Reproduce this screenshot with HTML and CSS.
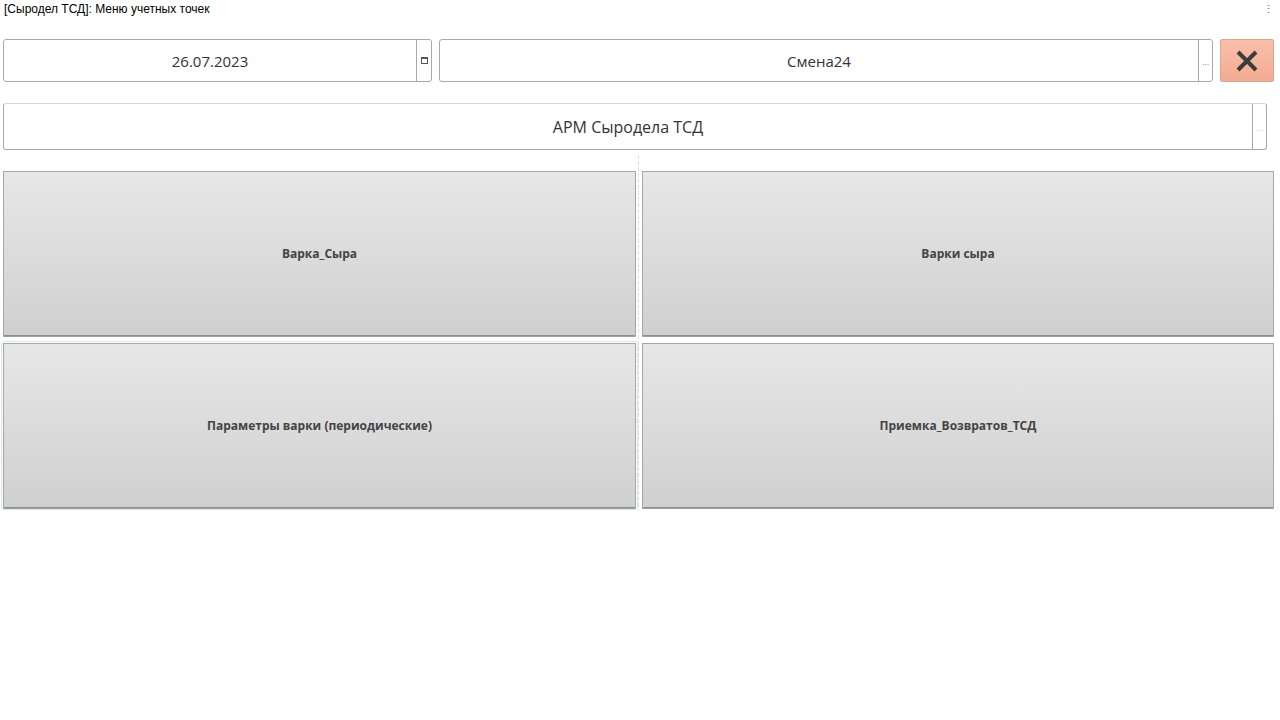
FILE: index.html
```html
<!DOCTYPE html>
<html lang="ru">
<head>
<meta charset="utf-8">
<title>Меню учетных точек</title>
<link rel="stylesheet" href="styles.css">
</head>
<body>
<div class="app">
  <div class="titlebar">
    <span class="title">[Сыродел ТСД]: Меню учетных точек</span>
    <span class="dots">⋮</span>
  </div>
  <div class="row top">
    <div class="field date">
      <div class="value">26.07.2023</div>
      <div class="btn cal">
        <svg width="7" height="7" viewBox="0 0 7 7"><rect x="0.5" y="0.5" width="6" height="6" fill="none" stroke="#555"/><rect x="0" y="0" width="7" height="2" fill="#555"/></svg>
      </div>
    </div>
    <div class="field shift">
      <div class="value">Смена24</div>
      <div class="btn ell">...</div>
    </div>
    <div class="close">
      <svg width="24" height="24" viewBox="0 0 24 24"><path d="M3 3 L21 21 M21 3 L3 21" stroke="#3c3c3c" stroke-width="4" stroke-linecap="butt"/></svg>
    </div>
  </div>
  <div class="row arm">
    <div class="field armf">
      <div class="value">АРМ Сыродела ТСД</div>
      <div class="btn ell faint">...</div>
    </div>
  </div>
  <div class="grid">
    <button class="tile">Варка_Сыра</button>
    <button class="tile">Варки сыра</button>
    <button class="tile focus">Параметры варки (периодические)</button>
    <button class="tile">Приемка_Возвратов_ТСД</button>
  </div>
</div>
</body>
</html>
```
FILE: styles.css
```css
html, body {
  margin: 0;
  padding: 0;
  background: #fff;
}
body {
  width: 1280px;
  height: 720px;
  overflow: hidden;
  font-family: "Open Sans", "Noto Sans", sans-serif;
  color: #333;
}
.app {
  display: flex;
  flex-direction: column;
}
.titlebar {
  height: 18px;
  display: flex;
  align-items: center;
  justify-content: space-between;
  padding: 0 6px 0 4px;
  font-family: "Liberation Sans", Arial, sans-serif;
  font-size: 12px;
  color: #000;
}
.dots {
  font-size: 11px;
  color: #666;
}
.row {
  display: flex;
}
.top {
  margin-top: 21px;
  padding-left: 3px;
  height: 43px;
  gap: 7px;
}
.field {
  display: flex;
  border: 1px solid #a9a9a9;
  border-radius: 3px;
  box-sizing: border-box;
  background: #fff;
}
.field .value {
  flex: 1;
  display: flex;
  align-items: center;
  justify-content: center;
  font-size: 15px;
  color: #333;
}
.field .btn {
  width: 14px;
  border-left: 1px solid #a9a9a9;
  display: flex;
  align-items: center;
  justify-content: center;
  font-size: 9px;
  color: #888;
}
.field .btn.ell {
  line-height: 1;
  padding-top: 2px;
  box-sizing: border-box;
}
.field .btn.faint {
  color: #ccc;
}
.date {
  width: 429px;
}
.shift {
  width: 774px;
}
.close {
  width: 54px;
  height: 43px;
  box-sizing: border-box;
  border: 1px solid #d9a593;
  border-radius: 2px;
  background: linear-gradient(#f9c0aa, #f3ab93);
  display: flex;
  align-items: center;
  justify-content: center;
}
.arm {
  margin-top: 21px;
  padding-left: 3px;
  height: 47px;
}
.armf {
  width: 1264px;
  border-top-color: #d8d8d8;
}
.armf .value {
  font-size: 16px;
}
.grid {
  margin: 5px 0 0 3px;
  width: 1271px;
  padding: 16px 0 3px 0;
  display: grid;
  grid-template-columns: 633px 632px;
  grid-auto-rows: 165px;
  column-gap: 6px;
  row-gap: 7px;
  background-image: repeating-linear-gradient(#dde0e3 0 4px, transparent 4px 6px);
  background-size: 1px 100%;
  background-position: 635px 0;
  background-repeat: no-repeat;
}
.tile {
  height: 165px;
  border: 1px solid #a6a6a6;
  border-bottom-color: #8f8f8f;
  border-radius: 1px;
  background: linear-gradient(#e6e7e6, #d0d0d0);
  box-shadow: 0 1px 0 #a0a0a0;
  font-family: "Open Sans", "Noto Sans", sans-serif;
  font-weight: bold;
  font-size: 12px;
  color: #444;
  padding: 0;
  cursor: pointer;
}
.tile.focus {
  outline: 1px solid #d6e6f5;
  outline-offset: 1px;
}
```
